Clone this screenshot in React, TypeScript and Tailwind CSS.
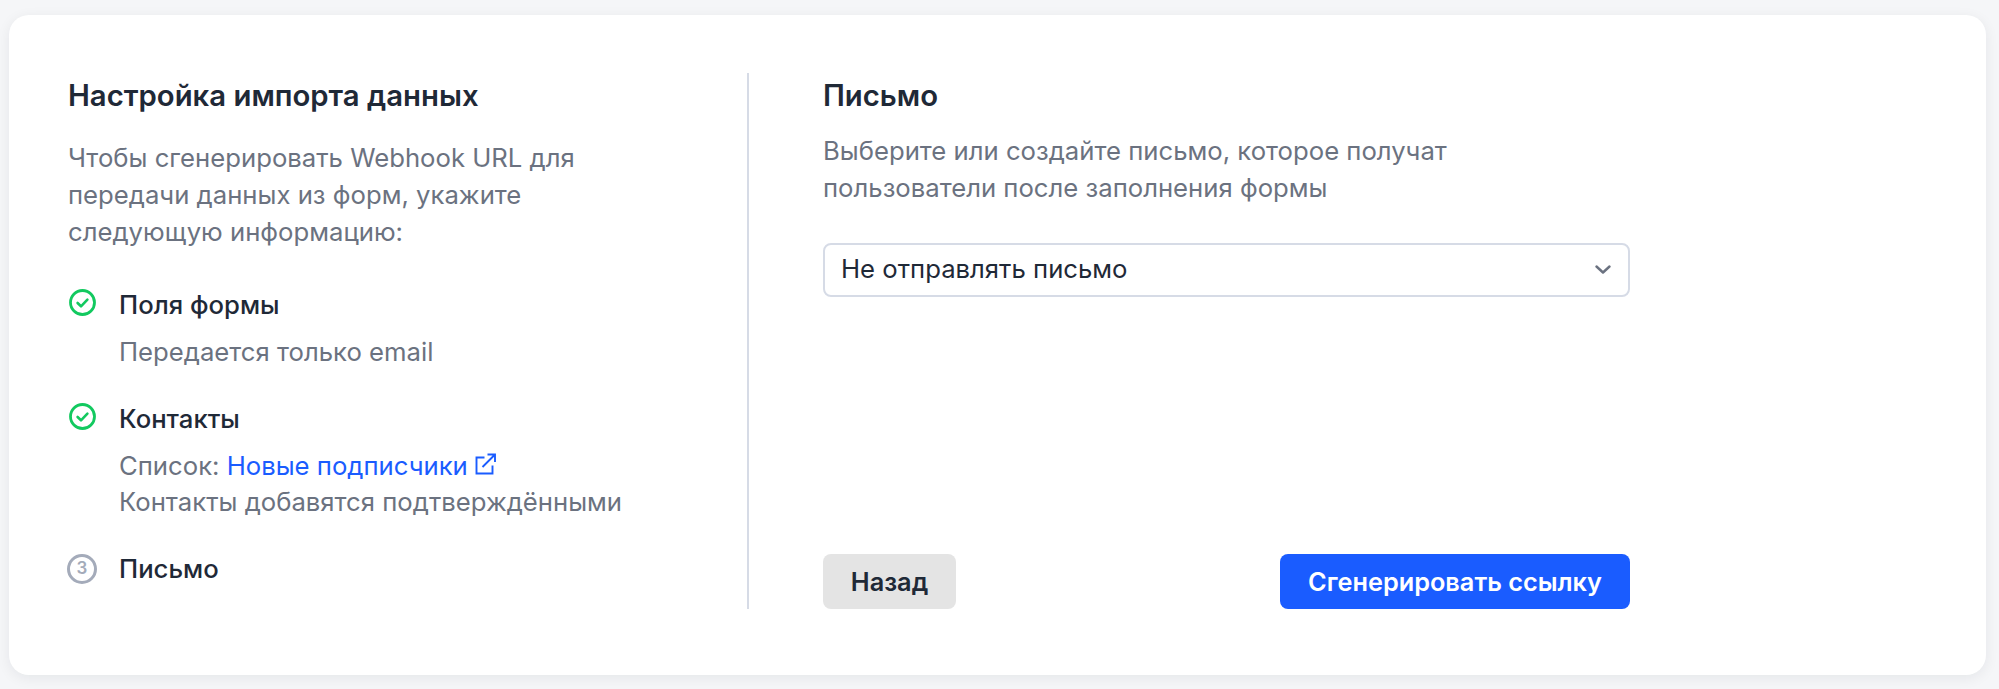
import React from 'react';

const CheckIcon = () => (
  <svg viewBox="0 0 27 27" fill="none" className="w-[27px] h-[27px] shrink-0 ml-px -mr-px -translate-y-[3px]">
    <circle cx="13.5" cy="13.5" r="12" stroke="#12c95f" strokeWidth="2.8" />
    <path d="M8.6 14l3.4 3.3 6.4-6.6" stroke="#12c95f" strokeWidth="2.6" strokeLinecap="round" strokeLinejoin="round" />
  </svg>
);

const NumberIcon = ({ n }: { n: number }) => (
  <div className="w-[30px] h-[30px] shrink-0 -ml-px -mr-[2px] rounded-full border-[3.5px] border-[#a4abba] flex items-center justify-center text-[17px] font-semibold text-[#a4abba]">
    {n}
  </div>
);

const ExternalIcon = () => (
  <svg viewBox="0 0 21 22" fill="none" className="w-[21px] h-[22px] inline-block ml-[7px] -mt-[6px] align-middle">
    <path d="M9.5 4.5H1.5v16h16v-8" stroke="#1a5cff" strokeWidth="1.9" strokeLinejoin="miter" />
    <path d="M7.5 14L19.5 2M12.5 1.5h7.5v7.5" stroke="#1a5cff" strokeWidth="1.9" />
  </svg>
);

const Step = ({ icon, title, children }: { icon: React.ReactNode; title: string; children?: React.ReactNode }) => (
  <div>
    <div className="flex items-center gap-6 h-[37px]">
      {icon}
      <div className="text-[#1f2937] font-medium text-[25.7px]">{title}</div>
    </div>
    {children && <div className="pl-[51px] mt-[10px] text-[#6b7280] text-[25.7px] leading-[36.5px]">{children}</div>}
  </div>
);

export default function App() {
  return (
    <div className="bg-[#f5f6f8] h-[689px] pt-[15px] pl-[9px] pr-[13px] pb-[14px] font-['Inter',sans-serif]">
      <div className="bg-white rounded-[20px] shadow-[0_3px_14px_rgba(17,24,39,0.07)] h-full flex pt-[58px] pb-[66px] pl-[59px]">
        <div className="w-[681px] shrink-0 border-r-2 border-[#d6dbe6]">
          <h2 className="text-[#1f2937] font-semibold text-[29.3px] leading-[46px]">Настройка импорта данных</h2>
          <p className="mt-[20px] w-[530px] text-[#6b7280] text-[25.7px] leading-[37px]">
            Чтобы сгенерировать Webhook URL для передачи данных из форм, укажите следующую информацию:
          </p>
          <div className="mt-[37px] flex flex-col gap-[30px]">
            <Step icon={<CheckIcon />} title="Поля формы">
              Передается только email
            </Step>
            <Step icon={<CheckIcon />} title="Контакты">
              <div>
                Список: <a className="text-[#1a5cff]">Новые подписчики</a>
                <ExternalIcon />
              </div>
              <div>Контакты добавятся подтверждёнными</div>
            </Step>
            <Step icon={<NumberIcon n={3} />} title="Письмо" />
          </div>
        </div>
        <div className="pl-[74px] w-[881px] flex flex-col">
          <h2 className="text-[#1f2937] font-semibold text-[29.3px] leading-[46px]">Письмо</h2>
          <p className="mt-[13px] text-[#6b7280] text-[25.7px] leading-[37px] w-[680px]">
            Выберите или создайте письмо, которое получат пользователи после заполнения формы
          </p>
          <div className="mt-[37px] h-[54px] rounded-[8px] border-2 border-[#d6dbe6] bg-white flex items-center justify-between pl-[16px] pr-[17px] pb-[2px] text-[#1f2937] text-[25.7px]">
            <span>Не отправлять письмо</span>
            <svg viewBox="0 0 16 9" fill="none" className="w-[16px] h-[9px]">
              <path d="M1.5 1.5L8 7.5l6.5-6" stroke="#6b7280" strokeWidth="2.4" strokeLinecap="round" strokeLinejoin="round" />
            </svg>
          </div>
          <div className="mt-auto flex justify-between">
            <button className="w-[133px] h-[55px] rounded-[8px] bg-[#e4e4e4] text-[#1f2937] font-semibold text-[25.3px]">Назад</button>
            <button className="w-[350px] h-[55px] rounded-[8px] bg-[#1a5cff] text-white font-semibold text-[25.3px]">Сгенерировать ссылку</button>
          </div>
        </div>
      </div>
    </div>
  );
}
